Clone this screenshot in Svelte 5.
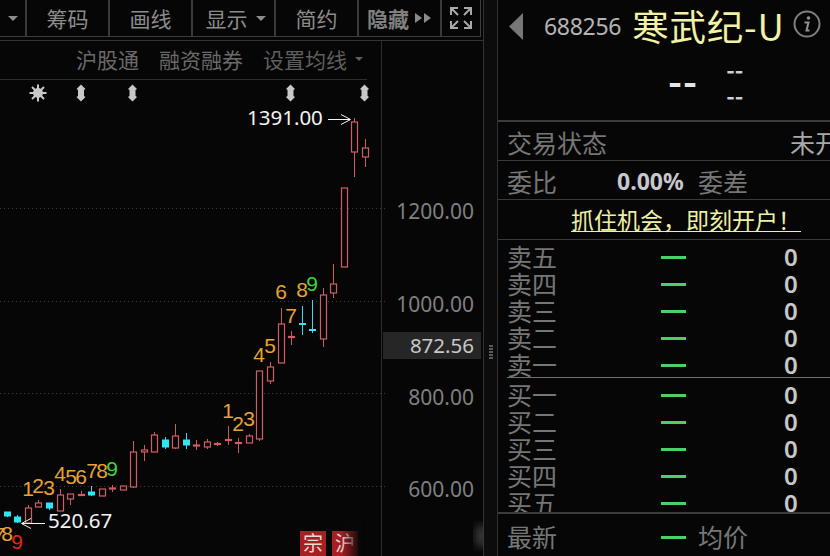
<script>
  const tools = [
    { label: '筹码' }, { label: '画线' }, { label: '显示', caret: true }, { label: '简约' }
  ];
  // x, wickTop, wickBottom, bodyTop, bodyBottom, kind (u = hollow red, d = filled cyan)
  const candles = [
    [7.5,512,517,512,516,'d'],[17.5,515,523,517,522,'d'],[28.5,505,524,508,523,'u'],[38.5,500,507,503,507,'u'],
    [49.5,503,510,503,508,'d'],[60.5,489,511,495,511,'u'],[70.5,494,505,494,499,'u'],[81.5,491,496,494.5,495.5,'u'],
    [91.5,486,496,492,495,'d'],[102.5,489,496,489,496,'u'],[112.5,485,492,488,489,'u'],[123.5,486,490,486,490,'u'],
    [133.5,441,488,452,487,'u'],[144.5,445,461,450,452,'u'],[154.5,432,452,435,452,'u'],[165.5,437,449,440,447,'d'],
    [175.5,424,449,436,448,'u'],[186.5,433,449,440,445,'d'],[196.5,440,450,445,446,'u'],[207.5,439,449,442,447,'u'],
    [217.5,442,446,443.5,444.5,'u'],[228.5,426,445,439.5,440.5,'u'],[238.5,438,453,442.5,443.5,'u'],[249.5,434,443,436,443,'u'],
    [259.5,371,441,371,439,'u'],[270.5,362,384,367,381,'u'],[281.5,308,363,324,363,'u'],[291.5,331,345,336.5,337.5,'u'],
    [302.5,306,335,323.5,324.5,'d'],[312.5,300,333,329.5,330.5,'d'],[323.5,288,347,295,339,'u'],[333.5,264,298,284,293,'u'],
    [344.5,188,267,188,267,'u'],[354.5,118,177,122,152,'u'],[365.5,139,167,148,157,'u']
  ];
  const numbers = [
    ['7',-1,534,'o'],['8',7,533,'o'],['9',17,541,'r'],
    ['1',28,488,'o'],['2',38,485,'o'],['3',49,487,'o'],['4',60,473,'o'],['5',71,476,'o'],['6',81,476,'o'],['7',92,470,'o'],['8',102,470,'o'],['9',112,468,'g'],
    ['1',228,410,'o'],['2',238,423,'o'],['3',249,418,'o'],['4',259,354,'o'],['5',270,345,'o'],['6',281,291,'o'],['7',291,315,'o'],['8',302,289,'o'],['9',312,283,'g']
  ];
  const grid = [208.5, 301.5, 393.5, 486.5];
  const axis = [['1200.00',211],['1000.00',304],['800.00',397],['600.00',489]];
  const capsules = [81, 132.5, 290.5, 364.5];
  const sells = ['卖五','卖四','卖三','卖二','卖一'];
  const buys = ['买一','买二','买三','买四','买五'];
</script>

<div class="screen">
  <section class="left">
    <nav class="toolbar">
      <div class="tool first"><span class="caret"></span></div>
      {#each tools as t}
        <div class="tool" class:with-caret={t.caret}>{t.label}{#if t.caret}<span class="caret after"></span>{/if}</div>
      {/each}
      <div class="tool hide"><b>隐藏</b><svg width="17" height="12" viewBox="0 0 17 12"><path d="M0 1l7 5-7 5zM9 1l7 5-7 5z" fill="#8a8a8a"/></svg></div>
      <div class="tool full">
        <svg width="26" height="26" viewBox="0 0 26 26" fill="none" stroke="#a8a8a8" stroke-width="2">
          <path d="M3 10V3h7M3 3l7 7M23 10V3h-7M23 3l-7 7M3 16v7h7M3 23l7-7M23 16v7h-7M23 23l-7-7"/>
        </svg>
      </div>
    </nav>
    <div class="tabs">
      <div class="tabs-inner">
        <span>沪股通</span><span>融资融券</span><span class="last">设置均线<i class="caret dim"></i></span>
      </div>
    </div>
    <svg class="chart" width="484" height="476" viewBox="0 80 484 476">
      <defs>
        <linearGradient id="fade" x1="0" x2="1" y1="0" y2="0">
          <stop offset="0" stop-color="#080808" stop-opacity="0"/>
          <stop offset="1" stop-color="#080808"/>
        </linearGradient>
        <filter id="blur"><feGaussianBlur stdDeviation="5"/></filter>
      </defs>
      {#each grid as y}
        <line x1="0" x2="387" y1={y} y2={y} stroke="#3c3c3c" stroke-dasharray="1 3"/>
      {/each}
      <line x1="381.5" x2="381.5" y1="80" y2="556" stroke="#2c2c2c"/>

      <g fill="#c8c8c8">
        <circle cx="38" cy="93" r="5"/>
        <path d="M38 84.500v17M29.500 93h17M32 87l12 12M44 87L32 99" stroke="#c8c8c8" stroke-width="2"/>
        {#each capsules as cx}
          <path d="M{cx} 84.500l4.500 4.500-1.500 1v6l1.500 1-4.500 4.500-4.500-4.500 1.500-1v-6l-1.500-1z"/>
        {/each}
      </g>

      {#each candles as [x, wt, wb, bt, bb, kind]}
        <line x1={x} x2={x} y1={wt} y2={wb} class={kind === 'u' ? 'wick-u' : 'wick-d'}/>
        {#if kind === 'u'}
          <rect x={x - 3} y={bt} width="6" height={bb - bt} class="body-u"/>
        {:else}
          <rect x={x - 3.5} y={bt - 0.5} width="7" height={bb - bt + 1} class="body-d"/>
        {/if}
      {/each}

      {#each numbers as [n, x, y, c]}
        <text x={x} y={y + 7.500} class="td {c}" text-anchor="middle">{n}</text>
      {/each}

      <text x="247" y="125" class="mark">1391.00</text>
      <path d="M328 119.500h22M341 114.500l9.500 5-9.500 5" class="arrow"/>
      <text x="48" y="528" class="mark">520.67</text>
      <path d="M45 523.500H22M31 518.500l-9.500 5 9.500 5" class="arrow"/>

      {#each axis as [t, y]}
        <text x="474" y={y + 7.500} class="axis" text-anchor="end">{t}</text>
      {/each}
      <rect x="383" y="332" width="98" height="27" fill="#262626"/>
      <text x="474" y="353" class="axis now" text-anchor="end">872.56</text>

      <rect x="300" y="531" width="26" height="25" fill="#a81f22"/>
      <text x="313" y="551" class="stamp" text-anchor="middle">宗</text>
      <rect x="332" y="531" width="26" height="25" fill="#a81f22"/>
      <text x="345" y="551" class="stamp" text-anchor="middle">沪</text>
      <rect x="341" y="520" width="20" height="36" fill="url(#fade)"/>
      <ellipse cx="482" cy="536" rx="7" ry="12" fill="#3a3a3a" filter="url(#blur)"/>
    </svg>
  </section>

  <div class="splitter"><div class="grip"><i></i><i></i><i></i><i></i><i></i></div></div>

  <aside class="right">
    <header class="title">
      <svg class="back" width="14" height="27" viewBox="0 0 14 27"><path d="M14 0v27L0 13.500z" fill="#777"/></svg>
      <span class="code">688256</span>
      <span class="name">寒武纪-U</span>
      <svg class="info" width="28" height="28" viewBox="0 0 28 28" fill="none">
        <circle cx="14" cy="14" r="12.500" stroke="#808080" stroke-width="2"/>
        <circle cx="15.500" cy="8" r="1.800" fill="#909090"/>
        <path d="M11.500 12.500h4l-2 8h3" stroke="#909090" stroke-width="2"/>
      </svg>
    </header>
    <div class="quote">
      <span class="big">--</span>
      <span class="small"><b>--</b><b>--</b></span>
    </div>
    <div class="row r1"><span class="lbl">交易状态</span><span class="val">未开盘</span></div>
    <div class="row r2"><span class="lbl l2">委比</span><strong>0.00%</strong><span class="lbl">委差</span></div>
    <div class="row r3"><a href="#top">抓住机会，即刻开户！</a></div>
    <div class="book">
      <div class="side sell">
        {#each sells as s}
          <div class="level"><span class="lbl">{s}</span><span class="dash"></span><span class="zero">0</span></div>
        {/each}
      </div>
      <div class="side buy">
        {#each buys as s}
          <div class="level"><span class="lbl">{s}</span><span class="dash"></span><span class="zero">0</span></div>
        {/each}
      </div>
    </div>
    <div class="latest"><span class="lbl">最新</span><span class="dash"></span><span class="lbl avg">均价</span></div>
  </aside>
</div>

<style>
  :global(body) { margin: 0; background: #060606; overflow: hidden; }
  .screen {
    width: 830px; height: 556px; display: flex; overflow: hidden; background: #060606;
    font-family: "Noto Sans CJK SC", "Noto Sans", sans-serif;
  }
  .left { width: 484px; flex: none; box-sizing: border-box; display: flex; flex-direction: column; border-right: 1px solid #333; }
  .toolbar {
    height: 36px; width: 480px; flex: none; display: flex; box-sizing: content-box;
    border-bottom: 1px solid #3e3e3e; border-right: 1px solid #3e3e3e;
  }
  .tool {
    width: 83px; flex: none; box-sizing: border-box; display: flex; align-items: center; justify-content: center;
    gap: 7px; border-right: 2px solid #3a3a3a; color: #8c8c8c; font-size: 21px; line-height: 36px;
  }
  .with-caret { gap: 8px; padding-left: 4px; }
  .first { width: 27px; }
  .hide { gap: 6px; }
  .hide b { font-weight: 700; color: #808080; }
  .full { width: 38px; border-right: 0; }
  .caret { display: block; width: 0; height: 0; border: 5px solid transparent; border-top: 5px solid #8c8c8c; border-bottom: 0; }
  .tabs { height: 39px; margin-top: 3px; width: 381px; flex: none; border-top: 1px solid #333; border-right: 1px solid #2c2c2c; position: relative; }
  .tabs::after { content: ""; position: absolute; top: 0; left: 381px; width: 102px; height: 1px; margin-top: -1px; background: #333; }
  .tabs-inner {
    width: 367px; height: 36px; padding-bottom: 2px; border-bottom: 1px solid #2e2e2e; display: flex; justify-content: flex-end; align-items: center;
    gap: 20px; color: #6a6a6a; font-size: 21px; box-sizing: content-box;
  }
  .last { display: flex; align-items: center; gap: 8px; margin-right: 4px; color: #5f5f5f; }
  .dim { border-top-color: #5f5f5f; border-width: 4px; border-bottom: 0; }
  .chart { display: block; flex: none; }
  .wick-u { stroke: #cc5a62; stroke-width: 1; }
  .wick-d { stroke: #45d8ea; stroke-width: 1; }
  .body-u { fill: #060606; stroke: #d05e64; stroke-width: 1.2; }
  .body-d { fill: #2fe6f4; }
  .td { font-size: 21px; font-family: "Liberation Sans", sans-serif; }
  .o { fill: #e8a235; }
  .r { fill: #e0281f; }
  .g { fill: #41d33e; }
  .mark { font-size: 20.500px; fill: #f4f4f4; font-family: "Noto Sans", sans-serif; }
  .arrow { fill: none; stroke: #f4f4f4; stroke-width: 1; }
  .axis { font-size: 21px; fill: #808080; font-family: "Noto Sans", sans-serif; }
  .now { fill: #c8c8c8; font-size: 20.500px; }
  .stamp { font-size: 20px; fill: #e8d8d8; }

  .splitter { width: 14px; flex: none; box-sizing: border-box; background: #0c0c0c; border-right: 1px solid #333; position: relative; }
  .grip { position: absolute; left: 5px; top: 345px; display: flex; flex-direction: column; gap: 1px; }
  .grip i { display: block; width: 4px; height: 2px; background: #5a5a5a; }

  .right { flex: 1; min-width: 0; overflow: hidden; display: flex; flex-direction: column; }
  .title { height: 52px; position: relative; flex: none; display: flex; align-items: center; }
  .back { margin-left: 11px; margin-top: 1px; flex: none; }
  .code { margin-left: 21px; font-size: 23px; color: #b4b4b4; font-family: "Noto Sans", sans-serif; letter-spacing: -0.3px; line-height: 1; }
  .name { margin-left: 11px; font-size: 36.500px; letter-spacing: 0.8px; color: #f2f2a4; white-space: nowrap; line-height: 1; }
  .info { margin-left: 8px; flex: none; margin-top: -4px; }
  .quote { height: 68px; flex: none; border-bottom: 2px solid #3c3c3c; position: relative; display: flex; box-sizing: content-box; }
  .big { margin-left: 170px; margin-top: 10px; font-size: 38px; font-weight: 700; color: #e4e4e4; line-height: 36px; letter-spacing: 1px; }
  .small { margin-left: 28px; margin-top: 5px; display: flex; flex-direction: column; gap: 2px; color: #d0d0d0; font-size: 23px; line-height: 24px; }
  .small b { font-weight: 700; }
  .lbl { color: #767676; font-size: 25px; line-height: 27px; white-space: nowrap; }
  .row { height: 38px; flex: none; display: flex; align-items: center; border-bottom: 1px solid #3a3a3a; padding-left: 9px; }
  .r1 { justify-content: space-between; margin-right: -35px; padding-top: 2px; box-sizing: content-box; height: 36px; }
  .val { color: #a8a8a8; font-size: 25px; line-height: 27px; }
  .r2 { padding-top: 2px; box-sizing: content-box; height: 36px; }
  .r2 strong { margin-left: 60px; width: 81px; color: #c6c8d0; font-size: 23px; font-weight: 700; font-family: "Noto Sans", sans-serif; }
  .r3 { padding-left: 73px; height: 39px; }
  .r3 a { color: #eef0a4; font-size: 23px; line-height: 27px; text-decoration: underline; text-underline-offset: 2px; text-decoration-thickness: 1px; white-space: nowrap; }
  .book { height: 272px; flex: none; overflow: hidden; border-bottom: 2px solid #3c3c3c; }
  .side { padding-left: 9px; }
  .sell { padding-top: 3px; height: 134px; position: relative; }
  .sell::after { content: ""; position: absolute; left: 9px; right: 0; top: 137px; height: 1px; background: #707070; }
  .buy { margin-top: 4px; }
  .level { height: 27px; display: flex; align-items: center; }
  .dash { width: 25px; height: 2.500px; background: #4ccf63; margin-left: 104px; margin-top: 2px; flex: none; }
  .zero { margin-left: 98px; color: #c8c8c8; font-size: 24px; font-weight: 600; font-family: "Noto Sans", sans-serif; line-height: 27px; }
  .latest { flex: 1; display: flex; align-items: center; padding-left: 9px; padding-top: 3px; }
  .avg { margin-left: 12px; }
</style>
